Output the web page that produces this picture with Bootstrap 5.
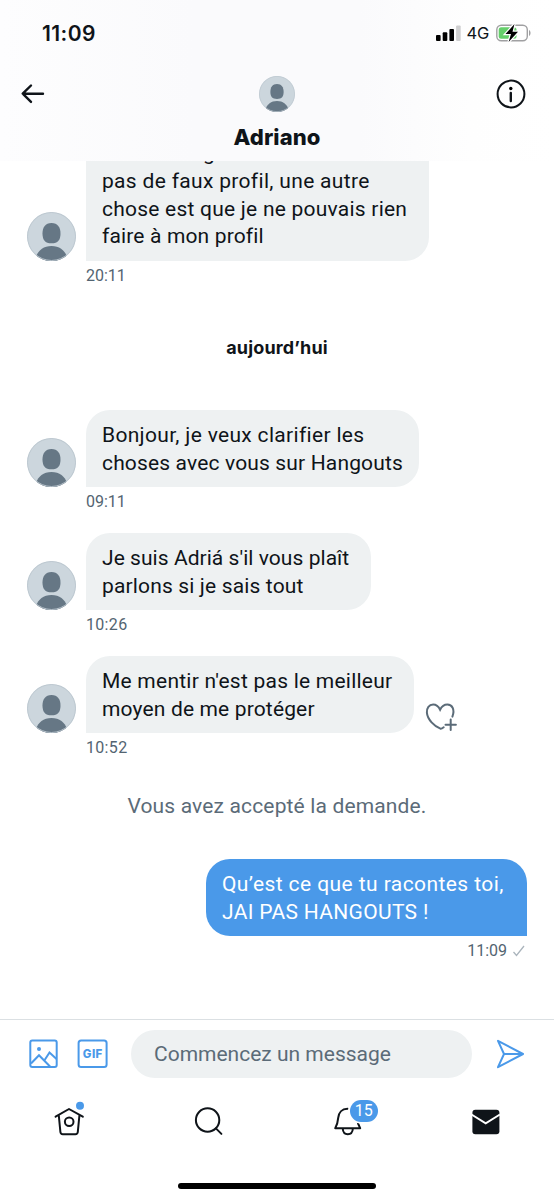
<!DOCTYPE html>
<html lang="fr">
<head>
<meta charset="utf-8">
<meta name="viewport" content="width=device-width, initial-scale=1">
<title>Adriano</title>
<link href="https://cdn.jsdelivr.net/npm/bootstrap@5.3.0/dist/css/bootstrap.min.css" rel="stylesheet">
<style>
body{font-family:Roboto,"Liberation Sans",sans-serif;color:#0f1419;background:#fff}
.screen{width:554px;height:1200px}
.topbar{height:161px;background:linear-gradient(90deg,#fdfdfe 0,#fafafc 35%,#fafafc 65%,#fefefe 85%,#fff 100%)}
.status{height:66px;padding:0 23px 0 42px}
.clock{font:600 21px/1 Inter,sans-serif;letter-spacing:.4px}
.net{font:400 16.500px/1 Inter,sans-serif;letter-spacing:-.2px;margin:0 7px 0 5px}
.titlebar{height:56px;padding:0 28px 0 21px}
.titlebar .who{margin-left:7px}
.peer{font:800 22px/30px Inter,sans-serif;letter-spacing:.1px}
.chat{height:858px;padding:0 27px 58px}
.msg{margin-bottom:21.100px}
.ava{width:49px;height:49px;margin-right:10px}
.bubble{background:#eef1f2;border-radius:24px 24px 24px 0;padding:11px 0 10px 16px;font-size:21px;line-height:28px;white-space:nowrap}
.bubble.me{background:#4a99e9;color:#fff;border-radius:24px 24px 0 24px}
.older{line-height:27.700px}
.w343{width:343px}.w333{width:333px}.w285{width:285px}.w328{width:328px}.w321{width:321px}
.k05{letter-spacing:.05px}.k15{letter-spacing:.15px}.k2{letter-spacing:.23px}.k3{letter-spacing:.32px}.k4{letter-spacing:.42px}
.stamp{font-size:16px;line-height:20px;color:#536471;margin:5px 0 0 59px}
.day{font:700 18px/28px Inter,sans-serif;letter-spacing:.15px;margin:48px 0}
.notice{font-size:21px;line-height:28px;color:#5b6b78;margin:12.700px 0 39px}
.composer{height:68px;border-top:1px solid #dbe0e3;padding:0 27px 0 28px;color:#4a99e9}
.field{width:341px;height:48px;background:#eef1f2;color:#5b6b78;font-size:21px;padding:2px 0 0 23px;margin:0 23px 0 22px}
.tabs{height:96px;padding-top:9px}
.count{left:33.500px;top:4px;width:28px;height:22px;background:#4a99e9;color:#fff;font-size:16px;line-height:22px}
.homebar{width:198px;height:6px;background:#000}
svg{display:block;flex:none}
</style>
</head>
<body>
<svg width="0" height="0" class="position-absolute"><defs>
<symbol id="person" viewBox="0 0 49 49"><clipPath id="round"><circle cx="24.5" cy="24.5" r="24.5"/></clipPath><g clip-path="url(#round)"><rect width="49" height="49" fill="#ccd6dd"/><g fill="#667785"><path d="M24.500 11c6.200 0 9 4.500 9 10.500 0 6.500-2.500 9.800-9 9.800s-9-3.300-9-9.800c0-6 2.800-10.500 9-10.500z"/><path d="M24.500 34c8 0 13.500 4.500 15.500 11v5H9v-5c2-6.500 7.500-11 15.500-11z"/></g><circle cx="24.500" cy="24.500" r="24" fill="none" stroke="#bcc7cf"/></g></symbol>
</defs></svg>
<div class="screen d-flex flex-column overflow-hidden">
  <header class="topbar flex-shrink-0">
    <div class="status d-flex align-items-center justify-content-between">
      <span class="clock">11:09</span>
      <div class="d-flex align-items-center">
        <svg width="25" height="16" viewBox="0 0 25 16"><rect y="10" width="4.600" height="6" rx="1"/><rect x="6.700" y="7.300" width="4.600" height="8.700" rx="1"/><rect x="13.400" y="4" width="4.600" height="12" rx="1"/><rect x="20.100" y=".5" width="4.600" height="15.500" rx="1" fill="#cfcfd0"/></svg>
        <span class="net">4G</span>
        <svg width="35" height="18" viewBox="0 0 35 18"><rect x=".8" y="1.300" width="30.500" height="15.400" rx="4.500" fill="#fff" stroke="#a0a0a2" stroke-width="1.400"/><rect x="2.700" y="3.200" width="17.800" height="11.600" rx="2.500" fill="#65cf6b"/><path d="M33 6v6c2-.8 2-5.200 0-6z" fill="#a0a0a2"/><path d="M18.500 0 9.500 10h5.500L12.600 18 22 7.700h-5.500z" stroke="#fff" stroke-width="2.500" paint-order="stroke"/></svg>
      </div>
    </div>
    <div class="titlebar d-flex align-items-center justify-content-between">
      <svg width="30" height="24" viewBox="0 0 30 24" fill="none" stroke="#0f1419" stroke-width="2.400" stroke-linecap="round" stroke-linejoin="round"><path d="M22 11.700H2M10 3.500 1.700 11.700 10 19.900"/></svg>
      <svg class="who" width="36" height="36"><use href="#person"/></svg>
      <svg width="30" height="30" viewBox="0 0 30 30"><circle cx="15" cy="15" r="13.400" fill="none" stroke="#0f1419" stroke-width="2"/><circle cx="14.800" cy="9.500" r="1.700"/><path d="M14.800 14v8" stroke="#0f1419" stroke-width="2.400" stroke-linecap="round"/></svg>
    </div>
    <div class="peer text-center">Adriano</div>
  </header>

  <main class="chat flex-shrink-0 d-flex flex-column justify-content-end overflow-hidden">
    <div>
      <div class="d-flex align-items-end"><svg class="ava"><use href="#person"/></svg>
        <div class="bubble older w343"><span style="margin-left:101px">g</span><br><span class="k3">pas de faux profil, une autre</span><br><span class="k2">chose est que je ne pouvais rien</span><br><span class="k15">faire à mon profil</span></div></div>
      <div class="stamp">20:11</div>
    </div>
    <div class="day text-center">aujourd’hui</div>
    <div class="msg">
      <div class="d-flex align-items-end"><svg class="ava"><use href="#person"/></svg>
        <div class="bubble w333"><span class="k3">Bonjour, je veux clarifier les</span><br><span class="k15">choses avec vous sur Hangouts</span></div></div>
      <div class="stamp">09:11</div>
    </div>
    <div class="msg">
      <div class="d-flex align-items-end"><svg class="ava"><use href="#person"/></svg>
        <div class="bubble w285"><span class="k05">Je suis Adriá s'il vous plaît</span><br><span class="k15">parlons si je sais tout</span></div></div>
      <div class="stamp k3">10:26</div>
    </div>
    <div class="msg">
      <div class="d-flex align-items-end"><svg class="ava"><use href="#person"/></svg>
        <div class="bubble w328"><span class="k2">Me mentir n'est pas le meilleur</span><br><span class="k15">moyen de me protéger</span></div>
        <svg class="ms-2" width="36" height="32" viewBox="-.4 0 36 32" fill="none" stroke="#5b6b78" stroke-width="2" stroke-linecap="round"><path d="M30 15.600c2.800-7.500-.5-12-5-12-3.300 0-5.800 2-7.300 5.100-1.500-3.100-4-5.100-7-5.100-4 0-6.500 3.400-6.200 8 .5 7 7.500 13.500 13.500 16.100 1.200.2 2-.4 3.300-1.400M28.300 18.500v10.400M23.100 23.700h10.400"/></svg></div>
      <div class="stamp k3">10:52</div>
    </div>
    <div class="notice text-center k15">Vous avez accepté la demande.</div>
    <div class="d-flex flex-column align-items-end">
      <div class="bubble me w321"><span class="k4">Qu’est ce que tu racontes toi,</span><br><span class="k3">JAI PAS HANGOUTS !</span></div>
      <div class="stamp d-flex align-items-center">11:09<svg class="ms-1" width="16" height="16" viewBox="0 0 16 16" fill="none" stroke="#aab4bc" stroke-width="1.300"><path d="M2.500 9 5.500 12.500 13 3"/></svg></div>
    </div>
  </main>

  <div class="composer flex-shrink-0 d-flex align-items-center">
    <svg width="30" height="30" viewBox="0 0 30 30" fill="none" stroke="#4a99e9" stroke-width="2"><rect x="2.300" y="1.600" width="26.400" height="26.400" rx="2"/><path d="m3 24.500 8-8.300L22.500 28M16.500 21.300 21.500 13.500l7 6.500"/><circle cx="11" cy="10" r="2" fill="#4a99e9" stroke="none"/></svg>
    <svg width="32" height="30" viewBox="0 0 32 30" style="margin-left:19px"><rect x="1.600" y="1.600" width="28" height="26.400" rx="2.500" fill="none" stroke="#4a99e9" stroke-width="2"/><text x="15.800" y="19" text-anchor="middle" font-family="Inter" font-weight="800" font-size="11.500" letter-spacing=".4" fill="#4a99e9">GIF</text></svg>
    <div class="field rounded-pill d-flex align-items-center">Commencez un message</div>
    <svg width="30" height="30" viewBox="0 0 30 30" fill="none" stroke="#4a99e9" stroke-width="2" stroke-linejoin="round"><path d="M3 1.800 28 15 3 28.200 9 15zM9 15h18"/></svg>
  </div>

  <nav class="tabs flex-shrink-0 d-flex">
    <div class="col-3 d-flex justify-content-center"><svg width="60" height="48" viewBox="0 0 60 48" fill="none" stroke="#0f1419" stroke-width="2" stroke-linejoin="round" stroke-linecap="round"><path d="M16.600 20.700 30 13l13.800 7.700M19.800 19.500l1.600 16.500q.2 2.200 2.400 2.200h12.600q2.200 0 2.400-2.200l1.600-16.500"/><circle cx="30.200" cy="25.700" r="4.300"/><circle cx="41" cy="9.700" r="4" fill="#4a99e9" stroke="none"/></svg></div>
    <div class="col-3 d-flex justify-content-center"><svg width="60" height="48" viewBox="0 0 60 48" fill="none" stroke="#0f1419" stroke-width="2" stroke-linecap="round"><circle cx="29.600" cy="24" r="11.700"/><path d="m37.900 32.400 5.500 5.500"/></svg></div>
    <div class="col-3 d-flex justify-content-center"><div class="position-relative"><svg width="60" height="48" viewBox="0 0 60 48" fill="none" stroke="#0f1419" stroke-width="2" stroke-linejoin="round"><path d="M31.400 12.800c-5.500 0-8.700 3.800-9.200 9-.4 4.500-.6 6.500-3 10.400h25c-2.200-3.600-2.800-6-3.200-10.400-.5-5.200-4-9-9.600-9zM26.700 32.500c.3 3.800 2.200 5.800 5.100 5.800s4.800-2 5.100-5.800"/><rect x="32" y="2.500" width="31.500" height="25" rx="12.500" fill="#fff" stroke="none"/></svg><span class="count position-absolute rounded-pill text-center">15</span></div></div>
    <div class="col-3 d-flex justify-content-center"><svg width="60" height="48" viewBox="0 0 60 48"><rect x="17.400" y="13.700" width="27" height="24.600" rx="3" fill="#0f1419"/><path d="m16.500 18.500 14.200 8.800 14.200-8.800" fill="none" stroke="#fff" stroke-width="2"/></svg></div>
  </nav>
  <div class="homebar rounded-pill mx-auto flex-shrink-0"></div>
</div>
<script src="https://cdn.jsdelivr.net/npm/bootstrap@5.3.0/dist/js/bootstrap.bundle.min.js"></script>
</body>
</html>
